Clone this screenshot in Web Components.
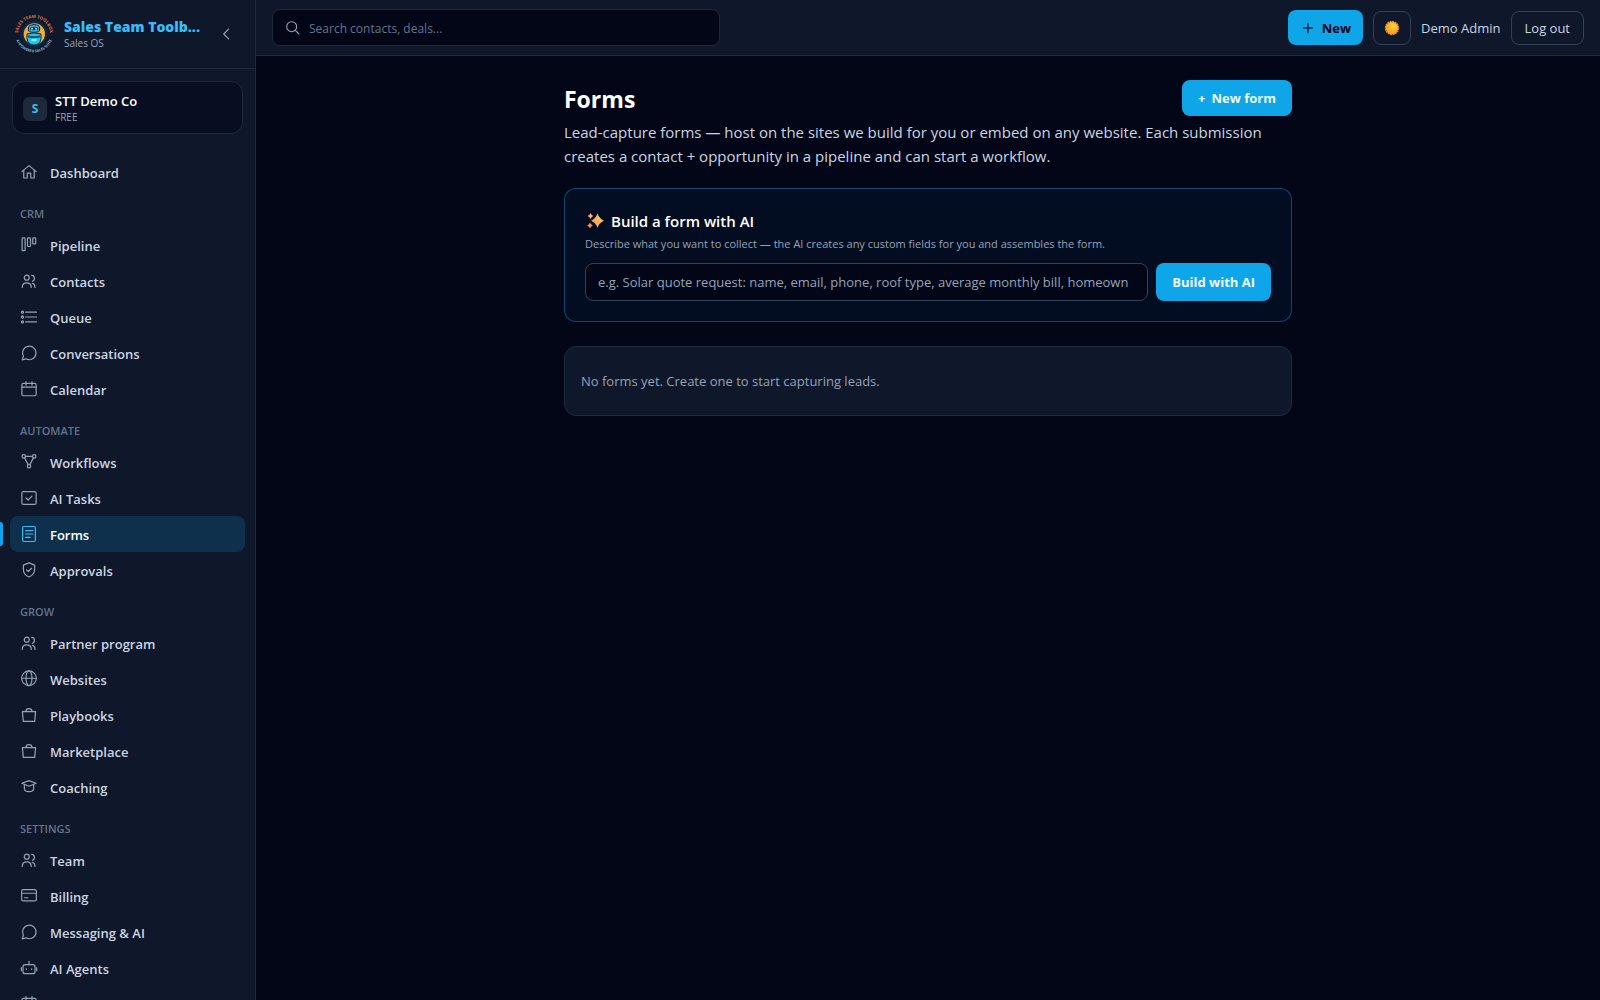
<!DOCTYPE html>
<html lang="en">
<head>
<meta charset="utf-8">
<meta name="viewport" content="width=device-width, initial-scale=1">
<title>Forms</title>
<style>
  :root {
    --bg: #020617;
    --panel: #0f172a;
    --line: #1e293b;
    --line-strong: #334155;
    --text: #e2e8f0;
    --text-soft: #cbd5e1;
    --muted: #94a3b8;
    --faint: #64748b;
    --accent: #0ea5e9;
    --accent-light: #38bdf8;
  }

  body {
    margin: 0;
    background: var(--bg);
    color: var(--text);
    font-family: "Open Sans", "Noto Sans", sans-serif;
    font-size: 13px;
    line-height: 20px;
  }
</style>
</head>
<body>
<app-shell>
  <side-bar slot="sidebar">
    <org-card slot="org" initial="S" name="STT Demo Co" plan="FREE"></org-card>
    <nav-item icon="home">Dashboard</nav-item>
    <nav-section label="CRM">
      <nav-item icon="pipeline">Pipeline</nav-item>
      <nav-item icon="users">Contacts</nav-item>
      <nav-item icon="list">Queue</nav-item>
      <nav-item icon="chat">Conversations</nav-item>
      <nav-item icon="calendar">Calendar</nav-item>
    </nav-section>
    <nav-section label="AUTOMATE">
      <nav-item icon="workflow">Workflows</nav-item>
      <nav-item icon="task">AI Tasks</nav-item>
      <nav-item icon="form" active>Forms</nav-item>
      <nav-item icon="shield">Approvals</nav-item>
    </nav-section>
    <nav-section label="GROW">
      <nav-item icon="users">Partner program</nav-item>
      <nav-item icon="globe">Websites</nav-item>
      <nav-item icon="bag">Playbooks</nav-item>
      <nav-item icon="bag">Marketplace</nav-item>
      <nav-item icon="cap">Coaching</nav-item>
    </nav-section>
    <nav-section label="SETTINGS">
      <nav-item icon="users">Team</nav-item>
      <nav-item icon="card">Billing</nav-item>
      <nav-item icon="chat">Messaging &amp; AI</nav-item>
      <nav-item icon="robot">AI Agents</nav-item>
      <nav-item icon="calendar"></nav-item>
    </nav-section>
  </side-bar>

  <top-bar slot="topbar" user="Demo Admin"></top-bar>

  <page-header heading="Forms">
    <app-button slot="action"><span>+</span><span>New form</span></app-button>
    Lead-capture forms — host on the sites we build for you or embed on any website. Each submission creates a contact + opportunity in a pipeline and can start a workflow.
  </page-header>
  <ai-builder></ai-builder>
  <empty-card>No forms yet. Create one to start capturing leads.</empty-card>
</app-shell>

<script>
  const ICONS = {
    home: '<path d="M2.500 11.500 12 3.500l9.500 8"/><path d="M5 9.500V20h4.700v-6.500h4.600V20H19V9.500"/>',
    pipeline: '<rect x="2.800" y="2.500" width="4" height="17" rx="1"/><rect x="10" y="2.500" width="4" height="11.500" rx="1"/><rect x="17" y="2.500" width="4" height="8" rx="1"/>',
    users: '<circle cx="9" cy="7.500" r="3.300"/><path d="M3 20.500c0-4 2.600-6 6-6s6 2 6 6"/><path d="M15.500 4.500a4 4 0 0 1 1 7.800"/><path d="M16.500 15c2.200.600 3.500 2.600 3.500 5.500"/>',
    list: '<path d="M7.500 5.500H22M7.500 12H22M7.500 18.500H22"/><circle cx="3.300" cy="5.500" r="1.400"/><circle cx="3.300" cy="12" r="1.400"/><circle cx="3.300" cy="18.500" r="1.400"/>',
    chat: '<path d="M3 21.300l1.500-5A9 9 0 1 1 8 19.800z"/>',
    calendar: '<rect x="2.500" y="4.500" width="19" height="16.500" rx="2"/><path d="M2.500 9.500h19M8 2v5M16 2v5"/>',
    workflow: '<circle cx="5" cy="4.500" r="2.300"/><circle cx="19" cy="4.500" r="2.300"/><circle cx="12" cy="17.500" r="2.300"/><path d="M7.300 4.500h9.400M6.100 6.500l4.800 9M17.900 6.500l-4.800 9"/>',
    task: '<rect x="2.500" y="3.500" width="19" height="17" rx="2"/><path d="M8 12l2.800 2.700L16 9.500"/>',
    form: '<rect x="3.500" y="2" width="17" height="20" rx="2"/><path d="M7.500 7.500h9.500M7.500 12h9.500M7.500 16.500h6"/>',
    shield: '<path d="M12 2.500l7.500 3v5.500c0 5-3 8.500-7.500 10.300C7.500 19.500 4.500 16 4.500 11V5.500z"/><path d="M8.700 11.800l2.400 2.200 4.300-4.300"/>',
    globe: '<circle cx="12" cy="11" r="9.800"/><path d="M2.200 11h19.600"/><ellipse cx="12" cy="11" rx="4" ry="9.800"/>',
    bag: '<path d="M3.200 7.500h17.600l-1.200 13H4.400z"/><path d="M8 7.300c0-5 8-5 8 0"/>',
    cap: '<path d="M2.500 7 12 3.500 21.500 7 12 11z"/><path d="M5.800 8.500V14c0 5.600 12.400 5.600 12.400 0V8.500"/>',
    card: '<rect x="2.200" y="3.500" width="19.600" height="15" rx="2"/><path d="M2.200 8.300h19.600M6 14.300h4.500"/>',
    robot: '<rect x="4" y="7.500" width="16" height="12" rx="3"/><path d="M12 3v4.500M1.800 11.500v4M22.200 11.500v4M8.400 13v1M15.600 13v1"/>',
    search: '<circle cx="10" cy="10" r="7.500"/><path d="M15.500 15.500 21 21"/>',
    plus: '<path d="M12 5v14M5 12h14"/>',
    chevron: '<path d="M15.500 5.500 9 12l6.500 6.500"/>'
  };

  class AppIcon extends HTMLElement {
    constructor() {
      super();
      this.attachShadow({ mode: "open" });
    }

    connectedCallback() {
      const icon = ICONS[this.getAttribute("name")] || "";
      this.shadowRoot.innerHTML = `
        <style>
          :host {
            display: block;
            flex: none;
            width: 18px;
            height: 18px;
          }
          svg {
            display: block;
            width: 100%;
            height: 100%;
            fill: none;
            stroke: currentColor;
            stroke-width: 1.6;
            stroke-linecap: round;
            stroke-linejoin: round;
          }
        </style>
        <svg viewBox="0 0 24 24" aria-hidden="true">${icon}</svg>
      `;
    }
  }

  class AppShell extends HTMLElement {
    constructor() {
      super();
      this.attachShadow({ mode: "open" });
    }

    connectedCallback() {
      this.shadowRoot.innerHTML = `
        <style>
          :host {
            display: grid;
            grid-template-columns: 256px minmax(0, 1fr);
            height: 100vh;
          }
          .content {
            display: flex;
            flex-direction: column;
            min-width: 0;
          }
          main {
            flex: 1;
            overflow: auto;
            padding: 24px 16px;
          }
          .page {
            display: flex;
            flex-direction: column;
            gap: 24px;
            max-width: 728px;
            margin: 0 auto;
          }
        </style>
        <slot name="sidebar"></slot>
        <div class="content">
          <slot name="topbar"></slot>
          <main><div class="page"><slot></slot></div></main>
        </div>
      `;
    }
  }

  class BrandLogo extends HTMLElement {
    constructor() {
      super();
      this.attachShadow({ mode: "open" });
    }

    connectedCallback() {
      this.shadowRoot.innerHTML = `
        <style>
          :host {
            display: block;
            flex: none;
            width: 40px;
            height: 40px;
          }
          svg {
            display: block;
            width: 100%;
            height: 100%;
          }
          text {
            font-size: 13px;
            font-weight: 700;
          }
        </style>
        <svg viewBox="0 0 120 120" aria-hidden="true">
          <defs>
            <path id="top" d="M13.600 72.400A48 48 0 1 1 106.400 72.400"/>
            <path id="bottom" d="M3 58A57 57 0 0 0 117 58"/>
          </defs>
          <circle cx="60" cy="60" r="44" fill="#08203a"/>
          <circle cx="60" cy="60" r="38" fill="#0a2b49"/>
          <circle cx="61" cy="60" r="32" fill="#f9a83a"/>
          <path d="M43 42q0-10 17-10t17 10v6q0 7-17 7t-17-7z" fill="#38a8d8" stroke="#0b2545" stroke-width="3"/>
          <rect x="48" y="40" width="24" height="8" rx="4" fill="#0b2545"/>
          <circle cx="54" cy="44" r="3" fill="#a5f3fc"/>
          <circle cx="66" cy="44" r="3" fill="#a5f3fc"/>
          <path d="M39 60q21-7 42 0v14q-3 19-21 19t-21-19z" fill="#22c3e6" stroke="#0b2545" stroke-width="3"/>
          <path d="M42 67q18 5 36 0" fill="none" stroke="#0b4f78" stroke-width="5"/>
          <rect x="52" y="75" width="16" height="7" rx="3" fill="#8deafa"/>
          <text fill="#e0763a"><textPath href="#top" startOffset="50%" text-anchor="middle">SALES TEAM TOOLBOX</textPath></text>
          <text fill="#93b4cf" style="font-size: 11px"><textPath href="#bottom" startOffset="50%" text-anchor="middle">AI-POWERED SALES SUITE</textPath></text>
        </svg>
      `;
    }
  }

  class SideBar extends HTMLElement {
    constructor() {
      super();
      this.attachShadow({ mode: "open" });
    }

    connectedCallback() {
      this.shadowRoot.innerHTML = `
        <style>
          :host {
            display: flex;
            flex-direction: column;
            min-height: 0;
            overflow: hidden;
            background: var(--panel);
            border-right: 1px solid var(--line);
          }
          header {
            display: flex;
            align-items: center;
            gap: 10px;
            height: 68px;
            flex: none;
            padding: 0 14px;
            border-bottom: 1px solid var(--line);
          }
          .brand {
            flex: 1;
            min-width: 0;
          }
          .name {
            font-size: 14px;
            font-weight: 800;
            line-height: 18px;
            color: var(--accent-light);
            white-space: nowrap;
          }
          .sub {
            font-size: 10px;
            line-height: 14px;
            color: var(--muted);
          }
          button {
            display: grid;
            place-items: center;
            width: 30px;
            height: 30px;
            padding: 0;
            border: 0;
            border-radius: 8px;
            background: none;
            color: var(--muted);
          }
          .org {
            flex: none;
            padding: 12px 12px 20px;
          }
          nav {
            flex: 1;
            min-height: 0;
            overflow: hidden;
            padding: 0 10px;
          }
        </style>
        <header>
          <brand-logo></brand-logo>
          <div class="brand">
            <div class="name">Sales Team Toolb...</div>
            <div class="sub">Sales OS</div>
          </div>
          <button type="button" aria-label="Collapse"><app-icon name="chevron"></app-icon></button>
        </header>
        <div class="org"><slot name="org"></slot></div>
        <nav><slot></slot></nav>
      `;
    }
  }

  class OrgCard extends HTMLElement {
    constructor() {
      super();
      this.attachShadow({ mode: "open" });
    }

    connectedCallback() {
      this.shadowRoot.innerHTML = `
        <style>
          :host {
            display: flex;
            align-items: center;
            gap: 8px;
            padding: 10px 10px 8px;
            border: 1px solid var(--line);
            border-radius: 12px;
            background: rgba(2, 6, 23, 0.5);
          }
          .avatar {
            display: grid;
            place-items: center;
            width: 24px;
            height: 24px;
            border-radius: 6px;
            background: var(--line);
            color: var(--accent-light);
            font-size: 12px;
            font-weight: 700;
          }
          .name {
            font-size: 13px;
            font-weight: 600;
            line-height: 18px;
            color: #fff;
          }
          .plan {
            font-size: 10px;
            line-height: 15px;
            color: var(--muted);
          }
        </style>
        <div class="avatar">${this.getAttribute("initial")}</div>
        <div>
          <div class="name">${this.getAttribute("name")}</div>
          <div class="plan">${this.getAttribute("plan")}</div>
        </div>
      `;
    }
  }

  class NavSection extends HTMLElement {
    constructor() {
      super();
      this.attachShadow({ mode: "open" });
    }

    connectedCallback() {
      this.shadowRoot.innerHTML = `
        <style>
          :host {
            display: block;
          }
          .label {
            padding: 16px 10px 5px;
            font-size: 11px;
            font-weight: 600;
            line-height: 16px;
            color: var(--faint);
          }
        </style>
        <div class="label">${this.getAttribute("label")}</div>
        <slot></slot>
      `;
    }
  }

  class NavItem extends HTMLElement {
    constructor() {
      super();
      this.attachShadow({ mode: "open" });
    }

    connectedCallback() {
      this.shadowRoot.innerHTML = `
        <style>
          :host {
            display: block;
          }
          a {
            position: relative;
            display: flex;
            align-items: center;
            gap: 12px;
            height: 36px;
            padding: 0 10px;
            border-radius: 8px;
            color: var(--text-soft);
            font-weight: 600;
            text-decoration: none;
          }
          span {
            padding-top: 2px;
          }
          app-icon {
            color: var(--muted);
          }
          :host([active]) a {
            background: rgba(14, 165, 233, 0.18);
            color: #fff;
          }
          :host([active]) app-icon {
            color: var(--accent-light);
          }
          :host([active]) a::before {
            content: "";
            position: absolute;
            left: -10px;
            top: 6px;
            bottom: 6px;
            width: 3px;
            border-radius: 0 3px 3px 0;
            background: var(--accent);
          }
        </style>
        <a href="#">
          <app-icon name="${this.getAttribute("icon")}"></app-icon>
          <span><slot></slot></span>
        </a>
      `;
    }
  }

  class TopBar extends HTMLElement {
    constructor() {
      super();
      this.attachShadow({ mode: "open" });
    }

    connectedCallback() {
      this.shadowRoot.innerHTML = `
        <style>
          :host {
            display: flex;
            flex: none;
            align-items: center;
            justify-content: space-between;
            gap: 16px;
            height: 55px;
            padding: 0 16px;
            background: var(--panel);
            border-bottom: 1px solid var(--line);
          }
          .search {
            display: flex;
            flex: 1;
            align-items: center;
            gap: 8px;
            box-sizing: border-box;
            max-width: 448px;
            height: 37px;
            padding: 0 12px;
            border: 1px solid var(--line);
            border-radius: 8px;
            background: var(--bg);
            color: var(--muted);
          }
          .search app-icon {
            width: 16px;
            height: 16px;
          }
          input {
            flex: 1;
            min-width: 0;
            padding: 2px 0 0;
            border: 0;
            outline: 0;
            background: none;
            color: var(--text);
            font: inherit;
            font-size: 12px;
          }
          input::placeholder {
            color: var(--faint);
          }
          .actions {
            display: flex;
            align-items: center;
            gap: 10px;
            color: var(--text-soft);
          }
          .actions app-icon {
            width: 16px;
            height: 16px;
          }
          svg {
            display: block;
            width: 16px;
            height: 16px;
          }
        </style>
        <label class="search">
          <app-icon name="search"></app-icon>
          <input type="search" aria-label="Search contacts, deals..." placeholder="Search contacts, deals...">
        </label>
        <div class="actions">
          <app-button kind="dark-text"><app-icon name="plus"></app-icon><span>New</span></app-button>
          <app-button kind="outline" label="Theme">
            <svg viewBox="0 0 16 16" aria-hidden="true">
              <defs>
                <radialGradient id="sun" cx="60%" cy="35%">
                  <stop offset="0" stop-color="#ffd23f"/>
                  <stop offset="1" stop-color="#f5a623"/>
                </radialGradient>
              </defs>
              <circle cx="8" cy="8" r="6.300" fill="url(#sun)"/>
              <circle cx="8" cy="8" r="6.600" fill="none" stroke="#f28c28" stroke-width="1.200" stroke-dasharray="1.800 0.792"/>
            </svg>
          </app-button>
          <span>${this.getAttribute("user")}</span>
          <app-button kind="outline">Log out</app-button>
        </div>
      `;
    }
  }

  class AppButton extends HTMLElement {
    constructor() {
      super();
      this.attachShadow({ mode: "open" });
    }

    connectedCallback() {
      const label = this.getAttribute("label");
      this.shadowRoot.innerHTML = `
        <style>
          :host {
            display: block;
            flex: none;
          }
          button {
            display: flex;
            align-items: center;
            justify-content: center;
            gap: 6px;
            box-sizing: border-box;
            height: 100%;
            min-height: 36px;
            padding: 0 16px;
            border: 0;
            border-radius: 8px;
            background: var(--accent);
            color: #f0f9ff;
            font: inherit;
            font-weight: 700;
            white-space: nowrap;
          }
          :host([kind="dark-text"]) button {
            min-height: 35px;
            padding: 0 12px;
            color: var(--bg);
          }
          :host([kind="outline"]) button {
            min-height: 34px;
            padding: 0 13px;
            border: 1px solid var(--line-strong);
            background: none;
            color: var(--text-soft);
            font-weight: 400;
          }
          :host([label]) button {
            padding: 0 10px;
          }
        </style>
        <button type="button"${label ? ` aria-label="${label}"` : ""}><slot></slot></button>
      `;
    }
  }

  class PageHeader extends HTMLElement {
    constructor() {
      super();
      this.attachShadow({ mode: "open" });
    }

    connectedCallback() {
      this.shadowRoot.innerHTML = `
        <style>
          :host {
            display: block;
            margin-bottom: -4px;
          }
          .row {
            display: flex;
            align-items: center;
            justify-content: space-between;
          }
          h1 {
            margin: 0;
            padding-top: 2px;
            font-size: 23px;
            font-weight: 700;
            line-height: 32px;
            color: #fff;
          }
          p {
            margin: 4px 0 0;
            font-size: 15px;
            line-height: 24px;
            color: var(--text-soft);
          }
        </style>
        <div class="row">
          <h1>${this.getAttribute("heading")}</h1>
          <slot name="action"></slot>
        </div>
        <p><slot></slot></p>
      `;
    }
  }

  class AiBuilder extends HTMLElement {
    constructor() {
      super();
      this.attachShadow({ mode: "open" });
    }

    connectedCallback() {
      this.shadowRoot.innerHTML = `
        <style>
          :host {
            display: block;
            padding: 20px;
            border: 1px solid rgba(14, 165, 233, 0.4);
            border-radius: 12px;
            background: rgba(14, 165, 233, 0.05);
          }
          h2 {
            display: flex;
            align-items: center;
            gap: 6px;
            margin: 0;
            font-size: 15px;
            font-weight: 600;
            line-height: 24px;
            color: #fff;
          }
          svg {
            width: 20px;
            height: 18px;
          }
          p {
            margin: 2px 0 10px;
            font-size: 11px;
            line-height: 18px;
            color: var(--muted);
          }
          form {
            display: flex;
            gap: 8px;
          }
          input {
            flex: 1;
            min-width: 0;
            box-sizing: border-box;
            height: 38px;
            padding: 0 12px;
            border: 1px solid var(--line-strong);
            border-radius: 8px;
            background: var(--bg);
            color: var(--text);
            font: inherit;
          }
          input::placeholder {
            color: var(--muted);
          }
        </style>
        <h2>
          <svg viewBox="0 0 20 18" aria-hidden="true">
            <defs>
              <linearGradient id="spark" x1="0" y1="1" x2="1" y2="0">
                <stop offset="0" stop-color="#f58a5b"/>
                <stop offset="1" stop-color="#ffd65c"/>
              </linearGradient>
            </defs>
            <path fill="url(#spark)" d="M12.500 1.500q1.700 5 6.500 7.300-4.800 2-6.500 7.200-1.700-5.200-6.500-7.200 4.800-2.300 6.500-7.300z"/>
            <path fill="#f7b267" d="M5.500 1q.800 2.200 2.800 3-2 .800-2.800 3-.800-2.200-2.800-3 2-.800 2.800-3z"/>
            <path fill="#f58a5b" d="M5 10.500q.800 2.200 2.800 3-2 .800-2.800 3-.800-2.200-2.800-3 2-.800 2.800-3z"/>
          </svg>
          <span>Build a form with AI</span>
        </h2>
        <p id="hint">Describe what you want to collect — the AI creates any custom fields for you and assembles the form.</p>
        <form>
          <input type="text" aria-labelledby="hint" placeholder="e.g. Solar quote request: name, email, phone, roof type, average monthly bill, homeown">
          <app-button>Build with AI</app-button>
        </form>
      `;
    }
  }

  class EmptyCard extends HTMLElement {
    constructor() {
      super();
      this.attachShadow({ mode: "open" });
    }

    connectedCallback() {
      this.shadowRoot.innerHTML = `
        <style>
          :host {
            display: block;
            padding: 24px 16px;
            border: 1px solid var(--line);
            border-radius: 12px;
            background: var(--panel);
            color: var(--muted);
          }
        </style>
        <slot></slot>
      `;
    }
  }

  customElements.define("app-icon", AppIcon);
  customElements.define("app-button", AppButton);
  customElements.define("brand-logo", BrandLogo);
  customElements.define("app-shell", AppShell);
  customElements.define("side-bar", SideBar);
  customElements.define("org-card", OrgCard);
  customElements.define("nav-section", NavSection);
  customElements.define("nav-item", NavItem);
  customElements.define("top-bar", TopBar);
  customElements.define("page-header", PageHeader);
  customElements.define("ai-builder", AiBuilder);
  customElements.define("empty-card", EmptyCard);
</script>
</body>
</html>
